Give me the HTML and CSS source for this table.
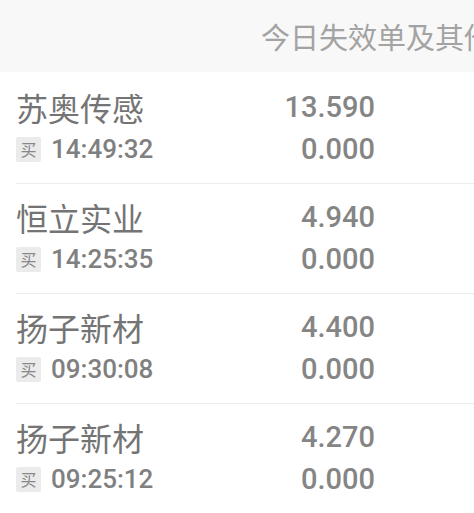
FILE: index.html
```html
<!DOCTYPE html>
<html lang="zh">
<head>
<meta charset="utf-8">
<link rel="stylesheet" href="styles.css">
</head>
<body>
<div class="header">
  <div class="header-spacer"></div>
  <div class="header-title">今日失效单及其他</div>
</div>
<div class="list">
  <div class="row">
    <div class="left">
      <div class="name">苏奥传感</div>
      <div class="meta"><span class="tag">买</span><span class="time">14:49:32</span></div>
    </div>
    <div class="nums">
      <div class="num">13.590</div>
      <div class="num">0.000</div>
    </div>
  </div>
  <div class="row">
    <div class="left">
      <div class="name">恒立实业</div>
      <div class="meta"><span class="tag">买</span><span class="time">14:25:35</span></div>
    </div>
    <div class="nums">
      <div class="num">4.940</div>
      <div class="num">0.000</div>
    </div>
  </div>
  <div class="row">
    <div class="left">
      <div class="name">扬子新材</div>
      <div class="meta"><span class="tag">买</span><span class="time">09:30:08</span></div>
    </div>
    <div class="nums">
      <div class="num">4.400</div>
      <div class="num">0.000</div>
    </div>
  </div>
  <div class="row">
    <div class="left">
      <div class="name">扬子新材</div>
      <div class="meta"><span class="tag">买</span><span class="time">09:25:12</span></div>
    </div>
    <div class="nums">
      <div class="num">4.270</div>
      <div class="num">0.000</div>
    </div>
  </div>
</div>
</body>
</html>
```
FILE: styles.css
```css
html, body {
  margin: 0;
  padding: 0;
  background: #ffffff;
  overflow: hidden;
}
body {
  font-family: "Noto Sans CJK SC", "Noto Sans", sans-serif;
}
.header {
  height: 72px;
  background: #f8f8f8;
  display: flex;
  align-items: center;
  overflow: hidden;
}
.header-spacer {
  flex: 0 0 261px;
}
.header-title {
  white-space: nowrap;
  font-size: 29px;
  color: #a3a3a3;
  line-height: 1;
}
.list {
  margin-top: 2px;
}
.row {
  margin-left: 16px;
  padding: 12px 0 13px;
  border-bottom: 1px solid #ececec;
  display: grid;
  grid-template-columns: 244px 115px;
}
.left, .nums {
  display: flex;
  flex-direction: column;
}
.name {
  height: 42px;
  display: flex;
  align-items: center;
  font-size: 32px;
  color: #747474;
  line-height: 1;
}
.meta {
  height: 42px;
  display: flex;
  align-items: center;
  gap: 10px;
}
.tag {
  width: 25px;
  height: 25px;
  background: #ebebeb;
  border-radius: 2px;
  color: #888888;
  font-size: 16px;
  display: flex;
  align-items: center;
  justify-content: center;
  line-height: 1;
}
.time {
  font-family: Roboto, "Liberation Sans", sans-serif;
  font-weight: 500;
  font-size: 26px;
  color: #808080;
  line-height: 1;
}
.num {
  height: 42px;
  display: flex;
  align-items: center;
  justify-content: flex-end;
  font-family: Roboto, "Liberation Sans", sans-serif;
  font-weight: 500;
  font-size: 29px;
  color: #858585;
  line-height: 1;
}
```
